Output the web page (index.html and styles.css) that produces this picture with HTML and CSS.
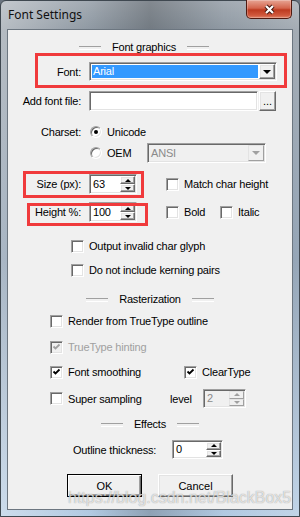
FILE: index.html
```html
<!DOCTYPE html>
<html lang="en">
<head>
    <meta charset="UTF-8">
    <meta name="viewport" content="width=device-width, initial-scale=1.0">
    <title>Font Settings</title>
    <link rel="stylesheet" href="styles.css">
</head>
<body>
    <div class="window">
        <div class="titlebar">
            <span class="title">Font Settings</span>
            <span class="close">
                <svg width="13" height="11" viewBox="0 0 13 11">
                    <path class="x-back" d="M3 2 L10 9 M10 2 L3 9"/>
                    <path class="x-front" d="M3 2 L10 9 M10 2 L3 9"/>
                </svg>
            </span>
        </div>

        <div class="client">
            <div class="sep sep-font">Font graphics</div>

            <div class="row r-font">
                <span class="lbl">Font:</span>
                <div class="combo combo-font">
                    <span class="combo-val selected">Arial</span>
                    <span class="drop"><i class="tri"></i></span>
                </div>
            </div>

            <div class="row r-file">
                <span class="lbl">Add font file:</span>
                <div class="edit edit-file"></div>
                <span class="browse">...</span>
            </div>

            <div class="row r-charset">
                <span class="lbl">Charset:</span>
                <span class="radio checked"></span>
                <span class="opt">Unicode</span>
            </div>

            <div class="row r-oem">
                <span class="lbl"></span>
                <span class="radio"></span>
                <span class="opt opt-oem">OEM</span>
                <div class="combo combo-ansi disabled">
                    <span class="combo-val">ANSI</span>
                    <span class="drop"><i class="tri"></i></span>
                </div>
            </div>

            <div class="row r-size">
                <span class="lbl">Size (px):</span>
                <div class="spin spin-size">
                    <span class="spin-val">63</span>
                    <span class="spin-btns"><span class="up"></span><span class="down"></span></span>
                </div>
                <span class="check check-match"><span class="cb"></span>Match char height</span>
            </div>

            <div class="row r-height">
                <span class="lbl">Height %:</span>
                <div class="spin spin-size">
                    <span class="spin-val">100</span>
                    <span class="spin-btns"><span class="up"></span><span class="down"></span></span>
                </div>
                <span class="check check-match check-bold"><span class="cb"></span>Bold</span>
                <span class="check"><span class="cb"></span>Italic</span>
            </div>

            <div class="row r-output indent-1">
                <span class="check"><span class="cb"></span>Output invalid char glyph</span>
            </div>

            <div class="row r-kerning indent-1">
                <span class="check"><span class="cb"></span>Do not include kerning pairs</span>
            </div>

            <div class="sep sep-raster">Rasterization</div>

            <div class="row r-render indent-2">
                <span class="check"><span class="cb"></span>Render from TrueType outline</span>
            </div>

            <div class="row r-hinting indent-2">
                <span class="check disabled"><span class="cb"><svg class="tick" viewBox="0 0 9 9"><path d="M1.5 3.5 L3.5 5.5 L7.5 1.5"/></svg></span>TrueType hinting</span>
            </div>

            <div class="row r-smooth indent-2">
                <span class="check check-smooth"><span class="cb"><svg class="tick" viewBox="0 0 9 9"><path d="M1.5 3.5 L3.5 5.5 L7.5 1.5"/></svg></span>Font smoothing</span>
                <span class="check"><span class="cb"><svg class="tick" viewBox="0 0 9 9"><path d="M1.5 3.5 L3.5 5.5 L7.5 1.5"/></svg></span>ClearType</span>
            </div>

            <div class="row r-super indent-2">
                <span class="check check-super"><span class="cb"></span>Super sampling</span>
                <span class="level">level</span>
                <div class="spin spin-level disabled">
                    <span class="spin-val">2</span>
                    <span class="spin-btns"><span class="up"></span><span class="down"></span></span>
                </div>
            </div>

            <div class="sep sep-effects">Effects</div>

            <div class="row r-outline indent-3">
                <span class="lbl-outline">Outline thickness:</span>
                <div class="spin spin-outline">
                    <span class="spin-val">0</span>
                    <span class="spin-btns"><span class="up"></span><span class="down"></span></span>
                </div>
            </div>

            <div class="row r-buttons">
                <span class="btn btn-default">OK</span>
                <span class="btn">Cancel</span>
            </div>
        </div>

        <!-- red annotation boxes from the screenshot -->
        <div class="mark mark-font"></div>
        <div class="mark mark-size"></div>
        <div class="mark mark-height"></div>

        <div class="watermark">https://blog.csdn.net/BlackBox5</div>
    </div>
</body>
</html>
```

FILE: styles.css
```css
* {
    box-sizing: border-box;
}

body {
    margin: 0;
    width: 300px;
    height: 517px;
    overflow: hidden;
    font-family: "Liberation Sans", Arial, sans-serif;
    font-size: 11px;
    letter-spacing: -0.2px;
    color: #000;
    background: #6a7480;
}

.window {
    position: relative;
    height: 517px;
    display: flex;
    flex-direction: column;
    padding: 0 6px 6px;
    border: 1px solid #3f4850;
    border-radius: 6px 6px 0 0;
    background:
        linear-gradient(90deg, rgba(255,255,255,0.35) 0%, rgba(255,255,255,0) 30%, rgba(0,0,0,0.2) 50%, rgba(255,255,255,0) 75%, rgba(255,255,255,0.2) 100%),
        linear-gradient(180deg, #a3abb3 0, #8e98a2 30px, #7d91a6 50%, #b2cae2 100%);
}

/* title bar */
.titlebar {
    height: 28px;
    flex-shrink: 0;
    display: flex;
    align-items: flex-start;
}

.title {
    font-family: "Noto Sans", sans-serif;
    font-size: 12px;
    letter-spacing: 0;
    line-height: 28px;
    padding-left: 1px;
    color: #101010;
}

.close {
    margin-left: auto;
    margin-right: 1px;
    margin-top: -1px;
    width: 46px;
    height: 19px;
    display: flex;
    align-items: center;
    justify-content: center;
    border: 1px solid #501a10;
    border-top: none;
    border-radius: 0 0 5px 5px;
    background: linear-gradient(180deg, #e7a594 0%, #d4654d 45%, #bd3a20 55%, #d0583c 85%, #e0846a 100%);
    box-shadow: inset 0 0 0 1px rgba(255,255,255,0.25);
}

.x-back {
    stroke: #43160e;
    stroke-width: 4.2;
    fill: none;
}

.x-front {
    stroke: #fff;
    stroke-width: 2.2;
    fill: none;
}

/* dialog body */
.client {
    flex: 1;
    display: flex;
    flex-direction: column;
    background: #f0f0f0;
    border: 1px solid #6c7680;
}

.row {
    display: flex;
    align-items: center;
    line-height: 14px;
    flex-shrink: 0;
}

.lbl {
    width: 73px;
    margin-right: 8px;
    text-align: right;
    flex-shrink: 0;
}

.indent-1 { padding-left: 63px; }
.indent-2 { padding-left: 42px; }
.indent-3 { padding-left: 65px; }

/* vertical rhythm */
.sep-font { margin-top: 10px; }
.r-font { margin-top: 8px; height: 19px; }
.r-file { margin-top: 10px; height: 20px; }
.r-charset { margin-top: 14px; height: 14px; }
.r-oem { margin-top: 4px; height: 20px; }
.r-size { margin-top: 11px; height: 20px; }
.r-height { margin-top: 8px; height: 20px; }
.r-output { margin-top: 17px; height: 14px; }
.r-kerning { margin-top: 10px; height: 14px; }
.sep-raster { margin-top: 15px; }
.r-render { margin-top: 8px; height: 14px; }
.r-hinting { margin-top: 12px; height: 14px; }
.r-smooth { margin-top: 11px; height: 14px; }
.r-super { margin-top: 10px; height: 19px; }
.sep-effects { margin-top: 9px; }
.r-outline { margin-top: 9px; height: 19px; }
.r-buttons { margin-top: 15px; height: 23px; justify-content: center; gap: 16px; }

/* group headers */
.sep {
    height: 14px;
    line-height: 14px;
    display: flex;
    align-items: center;
    justify-content: center;
    gap: 11px;
    flex-shrink: 0;
}

.sep::before,
.sep::after {
    content: "";
    width: 22px;
    height: 2px;
    margin-top: 2px;
    border-top: 1px solid #a0a0a0;
    border-bottom: 1px solid #fff;
}

.sep-font {
    padding-right: 12px;
}

/* classic 3d borders */
.edit,
.combo,
.spin,
.cb {
    background: #fff;
    border: 1px solid;
    border-color: #a0a0a0 #fff #fff #a0a0a0;
    box-shadow: inset 1px 1px #696969, inset -1px -1px #e3e3e3;
    padding: 1px;
}

.drop,
.browse,
.spin-btns span,
.btn {
    background: #f0f0f0;
    border: 1px solid;
    border-color: #fff #696969 #696969 #fff;
    box-shadow: inset -1px -1px #a0a0a0, inset 1px 1px #e3e3e3;
}

/* combo boxes */
.combo {
    display: flex;
    align-items: stretch;
}

.combo-font {
    width: 188px;
    height: 19px;
}

.combo-val {
    flex: 1;
    padding-left: 2px;
    line-height: 15px;
}

.combo-val.selected {
    margin: 1px 1px 1px 1px;
    padding-left: 1px;
    background: #3399ff;
    color: #fff;
    line-height: 13px;
}

.drop {
    width: 16px;
    display: flex;
    align-items: center;
    justify-content: center;
}

.tri {
    width: 0;
    height: 0;
    border-left: 4px solid transparent;
    border-right: 4px solid transparent;
    border-top: 4px solid #000;
}

.combo-ansi {
    width: 119px;
    height: 20px;
}

.combo.disabled {
    background: #f0f0f0;
    color: #8a8a8a;
}

.combo.disabled .combo-val {
    line-height: 16px;
}

.combo.disabled .tri {
    border-top-color: #a0a0a0;
}

.combo.disabled .drop {
    border-color: #e3e3e3 #a0a0a0 #a0a0a0 #e3e3e3;
    box-shadow: none;
}

/* edit and browse */
.edit-file {
    width: 169px;
    height: 20px;
}

.browse {
    width: 17px;
    height: 20px;
    margin-left: 1px;
    text-align: center;
    line-height: 18px;
    letter-spacing: 0;
}

/* radio buttons */
.radio {
    width: 12px;
    height: 12px;
    margin-left: 1px;
    margin-right: 5px;
    border-radius: 50%;
    background: #fff;
    border: 1px solid;
    border-color: #a0a0a0 #fff #fff #a0a0a0;
    box-shadow: inset 1px 1px #696969, inset -1px -1px #e3e3e3;
    display: flex;
    align-items: center;
    justify-content: center;
    flex-shrink: 0;
}

.radio.checked::after {
    content: "";
    width: 4px;
    height: 4px;
    border-radius: 50%;
    background: #000;
}

.opt-oem {
    width: 40px;
}

/* spinners */
.spin {
    display: flex;
    height: 20px;
}

.spin-size { width: 48px; }
.spin-level { width: 43px; height: 19px; }
.spin-outline { width: 51px; height: 19px; }

.spin-val {
    flex: 1;
    padding-left: 2px;
    line-height: 16px;
}

.spin-level .spin-val,
.spin-outline .spin-val {
    line-height: 15px;
}

.spin-btns {
    width: 15px;
    display: flex;
    flex-direction: column;
}

.spin-btns span {
    flex: 1;
    display: flex;
    align-items: center;
    justify-content: center;
}

.spin-btns .up::after,
.spin-btns .down::after {
    content: "";
    border-left: 3px solid transparent;
    border-right: 3px solid transparent;
}

.spin-btns .up::after {
    border-bottom: 3px solid #000;
}

.spin-btns .down::after {
    border-top: 3px solid #000;
}

.spin.disabled {
    background: #f0f0f0;
    color: #8a8a8a;
}

.spin.disabled .spin-btns span {
    border-color: #e3e3e3 #a0a0a0 #a0a0a0 #e3e3e3;
    box-shadow: none;
}

.spin.disabled .up::after { border-bottom-color: #a0a0a0; }
.spin.disabled .down::after { border-top-color: #a0a0a0; }

/* checkboxes */
.check {
    display: flex;
    align-items: center;
    gap: 5px;
    flex-shrink: 0;
}

.cb {
    width: 13px;
    height: 13px;
    display: flex;
    align-items: center;
    justify-content: center;
    flex-shrink: 0;
}

.tick {
    width: 9px;
    height: 9px;
}

.tick path {
    fill: none;
    stroke: #000;
    stroke-width: 1.8;
}

.check.disabled {
    color: #a0a0a0;
}

.check.disabled .cb {
    background: #f0f0f0;
}

.check.disabled .tick path {
    stroke: #a0a0a0;
}

.check-match { margin-left: 29px; }
.check-bold { width: 54px; }
.check-smooth { width: 134px; }
.check-super { width: 120px; }

.level {
    width: 33px;
}

.lbl-outline {
    width: 99px;
}

/* buttons */
.btn {
    width: 75px;
    height: 23px;
    display: flex;
    align-items: center;
    justify-content: center;
    letter-spacing: 0;
}

.btn-default {
    border: 1px solid #000;
    box-shadow: inset 1px 1px #fff, inset -1px -1px #696969, inset -2px -2px #a0a0a0;
}

/* overlays */
.mark {
    position: absolute;
    border: 3px solid #f03a3c;
}

.mark-font {
    left: 34px;
    top: 52px;
    width: 252px;
    height: 35px;
}

.mark-size {
    left: 22px;
    top: 170px;
    width: 121px;
    height: 27px;
}

.mark-height {
    left: 26px;
    top: 202px;
    width: 121px;
    height: 23px;
}

.watermark {
    position: absolute;
    left: 67px;
    top: 488px;
    font-size: 16px;
    line-height: 18px;
    letter-spacing: 0;
    color: rgba(255,255,255,0.7);
    text-shadow: 0 0 1px rgba(70,70,70,0.6);
    pointer-events: none;
}
```
